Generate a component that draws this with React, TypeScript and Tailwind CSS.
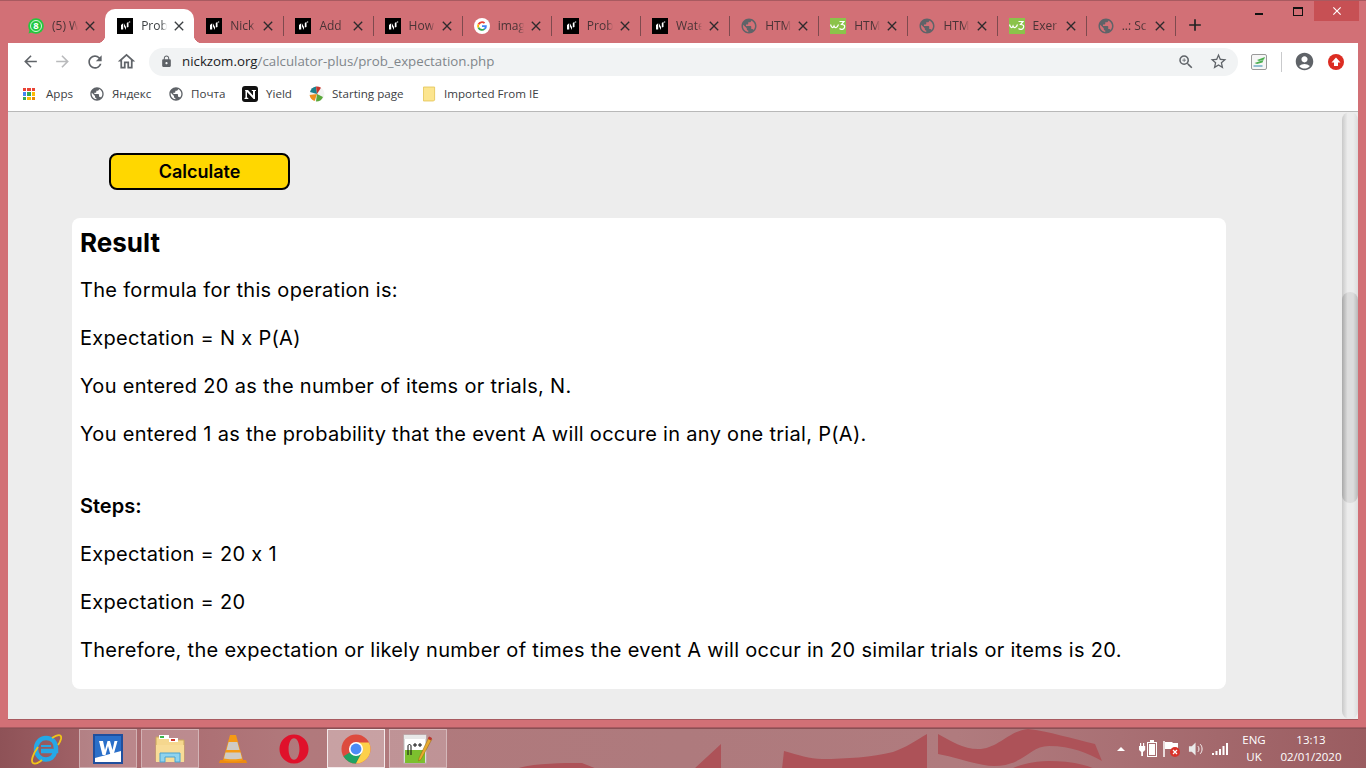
import type { ReactNode } from "react";
import {
  MdAccountCircle,
  MdAdd,
  MdArrowBack,
  MdArrowForward,
  MdClose,
  MdLock,
  MdOutlineHome,
  MdPublic,
  MdRefresh,
  MdStarBorder,
  MdZoomIn,
} from "react-icons/md";

const uiFont = "font-['Open_Sans','Noto_Sans',sans-serif]";

function NickIcon() {
  return (
    <svg viewBox="0 0 16 16" className="h-4 w-4 shrink-0">
      <rect width="16" height="16" fill="#000" />
      <path d="M4 11.500V7l2.200-1.800v6.300ZM7 5.500l2 3.500v3l-2-3.500ZM9.800 9.500V5l1.700-1.200V9ZM12 3.500h1.200v1H12Z" fill="#fff" />
    </svg>
  );
}

function GoogleIcon() {
  return (
    <svg viewBox="0 0 16 16" className="h-4 w-4 shrink-0">
      <circle cx="8" cy="8" r="8" fill="#fff" />
      <path d="M8 3.200a4.800 4.800 0 0 1 3.200 1.200L9.900 5.700A3 3 0 0 0 5.200 7L3.700 5.800A4.800 4.800 0 0 1 8 3.200Z" fill="#ea4335" />
      <path d="M3.700 5.800 5.200 7a3 3 0 0 0 0 2L3.700 10.200a4.800 4.800 0 0 1 0-4.400Z" fill="#fbbc05" />
      <path d="M3.700 10.200 5.200 9a3 3 0 0 0 4.600 1.400l1.400 1.200A4.800 4.800 0 0 1 3.700 10.200Z" fill="#34a853" />
      <path d="M12.800 7.200H8v1.900h2.800a2.400 2.400 0 0 1-1 1.300l1.400 1.200a4.800 4.800 0 0 0 1.600-4.400Z" fill="#4285f4" />
    </svg>
  );
}

function W3Icon() {
  return (
    <svg viewBox="0 0 16 16" className="h-4 w-4 shrink-0">
      <rect width="16" height="16" fill="#8bc34a" />
      <path d="M.5 6.500C1.500 10 3 10.500 4 8c.8 2.500 3 2.500 4.500-1.500M9.500 3.500h4.500l-2.500 3c3 0 3.500 1.500 3 3-.6 2-3.500 2.500-5 1" stroke="#fff" strokeWidth="1.200" fill="none" />
    </svg>
  );
}

function WhatsappIcon() {
  return (
    <svg viewBox="0 0 16 16" className="h-4 w-4 shrink-0">
      <path d="M.5 15.500 1.700 11.500 4.500 14.300Z" fill="#25c83f" />
      <circle cx="8" cy="8" r="7.800" fill="#25c83f" />
      <circle cx="8" cy="8" r="5.500" fill="none" stroke="#fff" strokeWidth=".8" />
      <text x="8" y="11.300" textAnchor="middle" fontSize="9.500" fontWeight="700" fill="#fff" fontFamily="Open Sans, sans-serif">
        8
      </text>
    </svg>
  );
}

function Globe({ className = "h-[18px] w-[18px]" }: { className?: string }) {
  return <MdPublic className={`shrink-0 text-[#5f6368] ${className}`} />;
}

type Tab = { title: string; icon: ReactNode; active?: boolean; sep?: boolean };

const tabs: Tab[] = [
  { title: "(5) W", icon: <WhatsappIcon /> },
  { title: "Prob", icon: <NickIcon />, active: true },
  { title: "Nick", icon: <NickIcon />, sep: true },
  { title: "Add", icon: <NickIcon />, sep: true },
  { title: "How", icon: <NickIcon />, sep: true },
  { title: "imag", icon: <GoogleIcon />, sep: true },
  { title: "Prob", icon: <NickIcon />, sep: true },
  { title: "Wate", icon: <NickIcon />, sep: true },
  { title: "HTM", icon: <Globe />, sep: true },
  { title: "HTM", icon: <W3Icon />, sep: true },
  { title: "HTM", icon: <Globe />, sep: true },
  { title: "Exer", icon: <W3Icon />, sep: true },
  { title: "..: Sc", icon: <Globe />, sep: true },
];

function TabItem({ tab }: { tab: Tab }) {
  return (
    <div
      className={`relative flex h-[34px] w-[89.15px] shrink-0 items-center pl-3 pr-[7px] ${
        tab.active ? "rounded-t-[10px] bg-white" : ""
      }`}
    >
      {tab.active && (
        <>
          <span className="absolute bottom-0 left-[-8px] h-2 w-2 bg-[radial-gradient(circle_at_0_0,transparent_8px,#fff_8.5px)]" />
          <span className="absolute bottom-0 right-[-8px] h-2 w-2 bg-[radial-gradient(circle_at_100%_0,transparent_8px,#fff_8.5px)]" />
        </>
      )}
      <span className="flex w-4 shrink-0 items-center justify-center">{tab.icon}</span>
      <span
        className={`ml-2 w-[29px] shrink-0 overflow-hidden whitespace-nowrap text-[12px] [mask-image:linear-gradient(to_right,black_70%,transparent_90%)] ${
          tab.active ? "text-[#3c4043]" : "text-[#4a3336]"
        }`}
      >
        {tab.title}
      </span>
      <MdClose className={`ml-auto h-4 w-4 shrink-0 ${tab.active ? "text-[#3c4043]" : "text-[#2f2a2d]"}`} />
      {tab.sep && <span className="absolute right-[-1px] top-[7px] h-5 w-px bg-[#7e4a4e]" />}
    </div>
  );
}

function TabStrip() {
  return (
    <div className="relative flex h-[43px] shrink-0 items-end border-t border-[#a85a60] bg-[#d27076] pl-[16px]">
      {tabs.map((t, i) => (
        <TabItem key={i} tab={t} />
      ))}
      <MdAdd className="ml-[10px] mb-[8px] h-[20px] w-[20px] text-[#222]" />
      <div className="absolute right-[7px] top-0 flex h-[20px] items-start">
        <div className="flex h-[20px] w-[45px] items-center justify-center">
          <span className="mt-[6px] h-[2px] w-[8px] bg-[#111]" />
        </div>
        <div className="flex h-[20px] w-[33px] items-center justify-center">
          <span className="h-[9px] w-[10px] border border-t-2 border-[#111]" />
        </div>
        <div className="flex h-[20px] w-[45px] items-center justify-center bg-[#c75054]">
          <MdClose className="h-[14px] w-[14px] text-white" />
        </div>
      </div>
    </div>
  );
}

function Toolbar() {
  return (
    <div className="flex h-[37px] shrink-0 items-center bg-white pl-[13px] text-[#5f6368]">
      <MdArrowBack className="h-[19px] w-[19px]" />
      <MdArrowForward className="ml-[13px] h-[19px] w-[19px] text-[#b9babc]" />
      <MdRefresh className="ml-[13px] h-[20px] w-[20px]" />
      <MdOutlineHome className="ml-[11px] h-[21px] w-[21px]" />
      <div className="ml-[12px] flex h-[28px] w-[1089px] items-center rounded-full bg-[#f1f3f4] pl-[11px] pr-[10px]">
        <MdLock className="h-[13px] w-[13px]" />
        <span className="ml-[9px] text-[13.3px]">
          <span className="text-[#202124]">nickzom.org</span>
          <span className="text-[#80868b]">/calculator-plus/prob_expectation.php</span>
        </span>
        <MdZoomIn className="ml-auto h-[18px] w-[18px]" />
        <MdStarBorder className="ml-[14px] h-[19px] w-[19px]" />
      </div>
      <svg viewBox="0 0 16 16" className="ml-[13px] h-4 w-4">
        <rect x=".5" y=".5" width="15" height="15" rx="1.500" fill="#f6f6f6" stroke="#9a9a9a" />
        <path d="M6 6 14 3l-1 2.500L8 7ZM3.500 9 12.500 6l-1 2.500L6 10Z" fill="#4caf50" />
        <path d="M2.500 12h9" stroke="#2e86ab" strokeWidth="1" />
      </svg>
      <span className="ml-[14px] h-5 w-px bg-[#c9cacc]" />
      <MdAccountCircle className="ml-[12px] h-[21px] w-[21px]" />
      <svg viewBox="0 0 16 16" className="ml-[13px] h-4 w-4">
        <circle cx="8" cy="8" r="8" fill="#dc2c22" />
        <path d="M8 3.500 12.500 8.500H10v3.500H6V8.500H3.500Z" fill="#fff" />
      </svg>
    </div>
  );
}

function AppsIcon() {
  const colors = ["#ea4335", "#ea4335", "#ea4335", "#4285f4", "#34a853", "#fbbc05", "#34a853", "#fbbc05", "#ea8a00"];
  return (
    <span className="grid h-3 w-3 grid-cols-3 gap-px">
      {colors.map((c, i) => (
        <span key={i} style={{ background: c }} />
      ))}
    </span>
  );
}

function Bookmarks() {
  return (
    <div className="flex h-[32px] shrink-0 items-center border-b border-[#b8b8b8] bg-white pb-[3px] pl-[15px] text-[11.6px] text-[#3c4043]">
      <AppsIcon />
      <span className="ml-[11px] w-[29px]">Apps</span>
      <Globe className="ml-[14px] h-[16px] w-[16px]" />
      <span className="ml-[7px] w-[40px]">Яндекс</span>
      <Globe className="ml-[16px] h-[16px] w-[16px]" />
      <span className="ml-[7px] w-[34px]">Почта</span>
      <svg viewBox="0 0 16 16" className="ml-[17px] h-4 w-4 shrink-0">
        <rect width="16" height="16" rx="3" fill="#111" />
        <path d="M3 4h3l5 5.500V5H9.800V4H14v1h-1v8h-1.400L5 6v5.500l1.300.5v1H2.500v-1l1-.5V5L3 4.500Z" fill="#fff" />
      </svg>
      <span className="ml-[8px] w-[27px]">Yield</span>
      <svg viewBox="0 0 16 16" className="ml-[16px] h-4 w-4 shrink-0">
        <circle cx="8" cy="8" r="7.500" fill="#f3f3f3" />
        <path d="M8 8 1 6a7.500 7.500 0 0 1 6-5.500Z" fill="#1b7f8c" />
        <path d="M8 8 7 .6a7.500 7.500 0 0 1 5 1.200Z" fill="#c8372d" />
        <path d="M8 8 .6 9a7.500 7.500 0 0 0 5 6Z" fill="#ef8f1d" />
        <path d="M8 8 14 11a7.500 7.500 0 0 1-7 4.500Z" fill="#5aa83b" />
      </svg>
      <span className="ml-[7px] w-[73px]">Starting page</span>
      <svg viewBox="0 0 14 16" className="ml-[18px] h-4 w-[13px] shrink-0">
        <path d="M.5.5h12v14l-1 1H.5Z" fill="#fce58f" stroke="#e6c860" />
      </svg>
      <span className="ml-[8px]">Imported From IE</span>
    </div>
  );
}

const paragraphs = [
  "The formula for this operation is:",
  "Expectation = N x P(A)",
  "You entered 20 as the number of items or trials, N.",
  "You entered 1 as the probability that the event A will occure in any one trial, P(A).",
];

const steps = [
  "Expectation = 20 x 1",
  "Expectation = 20",
  "Therefore, the expectation or likely number of times the event A will occur in 20 similar trials or items is 20.",
];

function Page() {
  const text = "h-[48px] leading-[48px]";
  return (
    <div className="flex min-h-0 flex-1 bg-[#ededed] font-['Inter',sans-serif] text-black">
      <div className="min-w-0 flex-1 pl-[64px] pt-[41px]">
        <button className="ml-[37px] block h-[37px] w-[181px] rounded-[8px] border-2 border-black bg-[#ffd700] text-[18px] font-semibold">
          Calculate
        </button>
        <div className="mt-[28px] h-[471px] w-[1154px] rounded-[8px] bg-white px-[8px] text-[20px] font-[430]">
          <h2 className="pt-[8px] text-[26px] font-bold leading-[34px]">Result</h2>
          <div className="mt-[6px] tracking-[0.015em]">
            {paragraphs.map((p) => (
              <p key={p} className={text}>
                {p}
              </p>
            ))}
            <p className={`${text} mt-[24px] font-semibold tracking-normal`}>Steps:</p>
            {steps.map((p) => (
              <p key={p} className={text}>
                {p}
              </p>
            ))}
          </div>
        </div>
      </div>
      <div className="flex w-[16px] shrink-0 flex-col rounded-full bg-[linear-gradient(to_right,#c9c9c9,#ececec_35%,#ececec_70%,#dcdcdc)]">
        <div className="mt-[180px] h-[211px] rounded-full bg-[linear-gradient(to_right,#a8a8a8,#dcdcdc_35%,#dcdcdc_70%,#b8b8b8)]" />
      </div>
    </div>
  );
}

function OfficeWord() {
  return (
    <svg viewBox="0 0 30 30" className="h-[30px] w-[30px]">
      <rect x="1" y="1" width="28" height="28" fill="#fff" stroke="#1f4f9e" strokeWidth="2" />
      <path d="M2 2h26v15L2 24Z" fill="#2a6fc9" />
      <path d="M6 7h4l2 9 2.500-9h2.500l2.500 9 2-9h3l-4 14h-3L15 12l-2.500 9h-3Z" fill="#fff" />
    </svg>
  );
}

function Folder() {
  return (
    <svg viewBox="0 0 32 32" className="h-[32px] w-[32px]">
      <path d="M2 4h12l2 3h14v21H2Z" fill="#f5d78e" stroke="#c9a75a" />
      <rect x="5" y="2" width="10" height="4" fill="#fff" />
      <rect x="6" y="3" width="4" height="2" fill="#3cb54a" />
      <rect x="15" y="5" width="9" height="4" fill="#fff" />
      <rect x="17" y="6" width="4" height="2" fill="#d13b2e" />
      <path d="M2 12h28v17H2Z" fill="#f8dc97" />
      <path d="M6 29v-9h20v9h-5v-5H11v5Z" fill="#8fd3ee" stroke="#4aa3d0" />
    </svg>
  );
}

function Vlc() {
  return (
    <svg viewBox="0 0 28 30" className="h-[30px] w-[28px]">
      <path d="M1 26h26l1 3H0Z" fill="#ec8a11" />
      <path d="M11 1h6l7 25c-3 2-17 2-20 0Z" fill="#f59a14" />
      <path d="M9.600 8h8.800l2.100 8h-13ZM6.500 18.500h15l1.500 6c-3 1-15 1-18 0Z" fill="#cfcbc5" />
    </svg>
  );
}

function Opera() {
  return (
    <svg viewBox="0 0 32 32" className="h-[30px] w-[30px]">
      <path
        fillRule="evenodd"
        d="M16 .5a15.500 15.500 0 1 1 0 31 15.500 15.500 0 0 1 0-31ZM16 4.500c-3.300 0-5.800 5-5.800 11.500s2.500 11.500 5.800 11.500 5.800-5 5.800-11.500S19.300 4.500 16 4.500Z"
        fill="#e0112b"
      />
    </svg>
  );
}

function Chrome() {
  return (
    <svg viewBox="0 0 32 32" className="h-[30px] w-[30px]">
      <circle cx="16" cy="16" r="15.500" fill="#dd4b3e" />
      <path d="M16 16 2.600 23.800A15.500 15.500 0 0 0 16 31.500l7-13Z" fill="#1ea362" />
      <path d="M16 16h15.500A15.500 15.500 0 0 1 16 31.500L23 18.500Z" fill="#fcd04a" />
      <path d="M16 9h13.800a15.500 15.500 0 0 1 1.700 7H22Z" fill="#fcd04a" />
      <circle cx="16" cy="16" r="7.500" fill="#fff" />
      <circle cx="16" cy="16" r="5.800" fill="#4b8bf5" />
    </svg>
  );
}

function NotepadPP() {
  return (
    <svg viewBox="0 0 30 32" className="h-[32px] w-[30px]">
      <rect x="1" y="2" width="22" height="28" fill="#fff" stroke="#bbb" />
      <path d="M1 2h22v4H1Z" fill="#e8e8e8" />
      <path d="M2 17h20v13H2Z" fill="#7cc02e" />
      <path d="M5 22v-9c0-2 3-2 3 0v9M10 12h4M12 10v4M15 12h4M17 10v4" stroke="#111" strokeWidth="1" fill="none" />
      <path d="M26 4 16 25l-.5 3 2.500-1.500L29 6Z" fill="#e8a92e" stroke="#8a6a10" strokeWidth=".5" />
      <path d="M26 3.500 29 5l-1 2.500-3-1.500Z" fill="#b33" />
    </svg>
  );
}

function Ie() {
  return (
    <svg viewBox="0 0 32 32" className="h-[32px] w-[32px]">
      <path d="M25 19c-1 5-5 7.500-9 7.500C10 26.500 6 22 6 16S10 5 16 5c6 0 10 4 10 11v2H11" fill="none" stroke="#25a8e6" strokeWidth="4.500" />
      <path d="M11 13h10" stroke="#25a8e6" strokeWidth="2" />
      <path d="M22 5c6-4 10-4 9 1-.5 2-1.500 4-3 6M8 14C3 21 .5 28 3 30c2 1.500 6-.5 9-3" fill="none" stroke="#f0c419" strokeWidth="1.800" />
    </svg>
  );
}

function TaskButton({ children, active }: { children: ReactNode; active?: boolean }) {
  return (
    <div
      className={`flex h-[39px] w-[58px] items-center justify-center border ${
        active ? "border-[#f4e9ea] bg-white/30" : "border-white/35 bg-white/20"
      }`}
    >
      {children}
    </div>
  );
}

function Tray() {
  return (
    <div className={`ml-auto flex h-full items-center text-[11.5px] text-white ${uiFont}`}>
      <span className="mr-[14px] h-0 w-0 border-x-[4px] border-b-[4px] border-x-transparent border-b-white" />
      <svg viewBox="0 0 18 17" className="h-[17px] w-[18px]">
        <path d="M1 3h1.200v3H1ZM4 3h1.200v3H4ZM0 6h6.200v4L4 12v4H2.200v-4L0 10Z" fill="#fff" />
        <rect x="8.500" y="2.500" width="9" height="14" fill="none" stroke="#fff" />
        <rect x="10" y="4" width="6" height="11" fill="#fff" />
        <rect x="11" y="0" width="4" height="2" fill="#fff" />
      </svg>
      <svg viewBox="0 0 18 18" className="ml-[6px] h-[18px] w-[18px]">
        <path d="M1 1v16" stroke="#fff" strokeWidth="1.500" />
        <path d="M2 2h7l1 1h5v7H9l-1-1H2Z" fill="#fff" />
        <circle cx="12" cy="12" r="5" fill="#d9322a" />
        <path d="m10 10 4 4m0-4-4 4" stroke="#fff" strokeWidth="1.200" />
      </svg>
      <svg viewBox="0 0 18 16" className="ml-[7px] h-[16px] w-[17px]">
        <path d="M1 5h3l4-4v14l-4-4H1Z" fill="#e9e9e9" />
        <path d="M10.500 5c1.500 1.500 1.500 4.500 0 6M13 3c2.500 2.500 2.500 7.500 0 10" fill="none" stroke="#fff" />
      </svg>
      <svg viewBox="0 0 16 12" className="ml-[7px] h-[12px] w-[16px]">
        <path d="M0 10h2v2H0ZM3.500 8h2v4h-2ZM7 6h2v6H7ZM10.500 3h2v9h-2ZM14 0h2v12h-2Z" fill="#fff" />
      </svg>
      <div className="ml-[14px] flex w-[24px] flex-col items-center leading-[16.5px]">
        <span>ENG</span>
        <span>UK</span>
      </div>
      <div className="ml-[14px] mr-[24px] flex w-[62px] flex-col items-center leading-[16.5px]">
        <span>13:13</span>
        <span>02/01/2020</span>
      </div>
    </div>
  );
}

function Taskbar() {
  return (
    <div className="relative flex h-[40px] shrink-0 items-center overflow-hidden border-t border-[#8a5055] bg-[linear-gradient(to_right,#8e5257,#a9696e_9%,#b1797c_22%,#ae7a7d_50%,#b07b7e_70%,#a97074_82%,#9a5c60_100%)]">
      <svg viewBox="0 0 1366 40" className="absolute inset-0 h-[40px] w-[1366px]">
        <path
          d="M515 40c20-6 45-6 67-6l15 6ZM694 40l27-25v25ZM782 40l2-18c15 4 25 8 38 8 25 0 50-2 71-7 12-4 24-12 34-18v35ZM938 5c15 8 25 15 40 15 20 0 30-18 50-20 20 2 45 10 67 15l7 17c-15-8-30-15-53-15-20 0-25 20-55 20-15 0-35-8-56-12ZM1011 40c10-5 25-8 38-8 20 0 35 3 46 8Z"
          fill="#ad5258"
        />
      </svg>
      <div className="relative flex h-full w-full items-center">
        <div className="flex w-[79px] items-center pl-[30px]">
          <Ie />
        </div>
        <TaskButton>
          <OfficeWord />
        </TaskButton>
        <div className="ml-[4px]">
          <TaskButton>
            <Folder />
          </TaskButton>
        </div>
        <div className="ml-[4px] flex w-[62px] justify-center pr-[2px]">
          <Vlc />
        </div>
        <div className="flex w-[62px] justify-center pr-[4px]">
          <Opera />
        </div>
        <TaskButton active>
          <Chrome />
        </TaskButton>
        <div className="ml-[4px]">
          <TaskButton>
            <NotepadPP />
          </TaskButton>
        </div>
        <Tray />
      </div>
    </div>
  );
}

export default function App() {
  return (
    <div className={`flex h-[768px] w-[1366px] flex-col overflow-hidden bg-[#d27076] ${uiFont}`}>
      <div className="flex min-h-0 flex-1 flex-col border-b border-[#a85a60]">
        <TabStrip />
        <div className="flex min-h-0 flex-1 flex-col pb-[7px] pl-[8px] pr-[8px]">
          <div className="flex min-h-0 flex-1 flex-col border-b border-[#a85a60]">
            <Toolbar />
            <Bookmarks />
            <Page />
          </div>
        </div>
      </div>
      <Taskbar />
    </div>
  );
}
